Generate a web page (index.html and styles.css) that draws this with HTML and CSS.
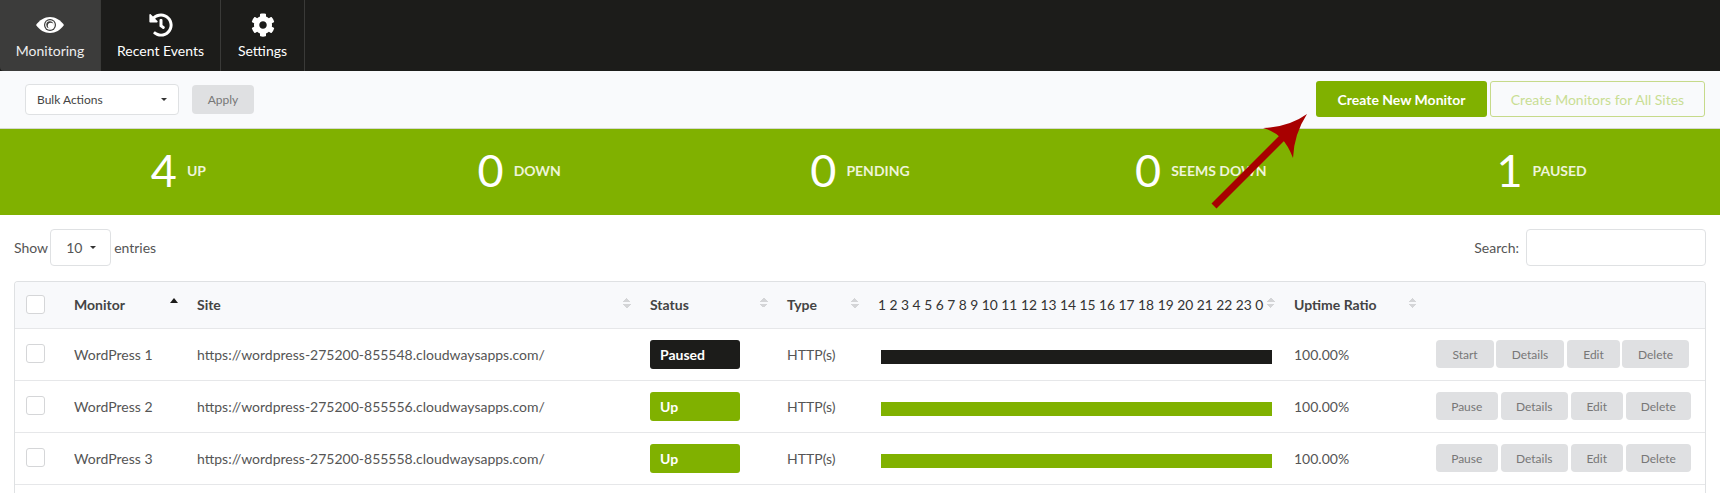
FILE: index.html
```html
<!DOCTYPE html>
<html lang="en">
<head>
<meta charset="utf-8">
<title>Monitoring</title>
<link rel="stylesheet" href="styles.css">
</head>
<body>
<nav class="nav">
  <a class="tab tab-active">
    <svg class="tab-icon eye" viewBox="0 0 28 16"><path fill="#fff" d="M0 8C3.500 3 8.500 0 14 0s10.500 3 14 8c-3.500 5-8.500 8-14 8S3.500 13 0 8z"/><circle cx="14" cy="8" r="6" fill="#3c3c3b"/><circle cx="14" cy="8" r="4.800" fill="#fff"/><circle cx="13.800" cy="7.800" r="3.500" fill="#3c3c3b"/><circle cx="14.800" cy="8.800" r="3" fill="#fff"/></svg>
    <span>Monitoring</span>
  </a>
  <a class="tab tab-events">
    <svg class="tab-icon" viewBox="0 0 512 512"><path fill="#fff" d="M504 255.531c.253 136.64-111.18 248.372-247.82 248.468-59.015.042-113.223-20.53-155.822-54.911-11.077-8.94-11.905-25.541-1.839-35.607l11.267-11.267c8.609-8.609 22.353-9.551 31.891-1.984C173.062 425.135 212.781 440 256 440c101.705 0 184-82.311 184-184 0-101.705-82.311-184-184-184-48.814 0-93.149 18.969-126.068 49.932l50.754 50.754c10.08 10.08 2.941 27.314-11.313 27.314H24c-8.837 0-16-7.163-16-16V38.627c0-14.254 17.234-21.393 27.314-11.314l49.372 49.372C129.209 34.136 189.552 8 256 8c136.81 0 247.747 110.78 248 247.531zm-180.912 78.784l9.823-12.63c8.138-10.463 6.253-25.542-4.21-33.679L288 256.349V152c0-13.255-10.745-24-24-24h-16c-13.255 0-24 10.745-24 24v135.651l65.409 50.874c10.463 8.137 25.541 6.253 33.679-4.21z"/></svg>
    <span>Recent Events</span>
  </a>
  <a class="tab tab-settings">
    <svg class="tab-icon" viewBox="0 0 512 512"><path fill="#fff" d="M487.4 315.7l-42.6-24.6c4.3-23.2 4.3-47 0-70.2l42.6-24.6c4.9-2.8 7.1-8.6 5.5-14-11.1-35.6-30-67.8-54.7-94.6-3.8-4.1-10-5.1-14.8-2.3L380.8 110c-17.9-15.4-38.5-27.3-60.8-35.1V25.8c0-5.6-3.9-10.5-9.4-11.7-36.7-8.2-74.3-7.8-109.2 0-5.5 1.2-9.4 6.1-9.4 11.7V75c-22.2 7.9-42.8 19.8-60.8 35.1L88.7 85.5c-4.9-2.8-11-1.9-14.8 2.3-24.7 26.7-43.6 58.9-54.7 94.6-1.7 5.4.6 11.2 5.5 14L67.3 221c-4.3 23.2-4.3 47 0 70.2l-42.6 24.6c-4.9 2.8-7.1 8.6-5.5 14 11.1 35.6 30 67.8 54.7 94.6 3.8 4.1 10 5.1 14.8 2.3l42.6-24.6c17.9 15.4 38.5 27.3 60.8 35.1v49.2c0 5.6 3.9 10.5 9.4 11.7 36.7 8.2 74.3 7.8 109.2 0 5.5-1.2 9.4-6.1 9.4-11.7v-49.2c22.2-7.9 42.8-19.8 60.8-35.1l42.6 24.6c4.9 2.8 11 1.9 14.8-2.3 24.7-26.7 43.6-58.9 54.7-94.6 1.5-5.5-.7-11.3-5.6-14.1zM256 336c-44.1 0-80-35.9-80-80s35.9-80 80-80 80 35.9 80 80-35.9 80-80 80z"/></svg>
    <span>Settings</span>
  </a>
</nav>

<div class="toolbar">
  <div class="toolbar-left">
    <div class="select bulk"><span>Bulk Actions</span><i class="caret"></i></div>
    <button class="btn-apply">Apply</button>
  </div>
  <div class="toolbar-right">
    <button class="btn-create">Create New Monitor</button>
    <button class="btn-outline">Create Monitors for All Sites</button>
  </div>
</div>

<section class="stats">
  <div class="stat"><span class="num">4</span><span class="label">Up</span></div>
  <div class="stat"><span class="num">0</span><span class="label">Down</span></div>
  <div class="stat"><span class="num">0</span><span class="label">Pending</span></div>
  <div class="stat"><span class="num">0</span><span class="label">Seems Down</span></div>
  <div class="stat"><span class="num">1</span><span class="label">Paused</span></div>
</section>

<div class="controls">
  <div class="length">Show <div class="select len"><span>10</span><i class="caret"></i></div> entries</div>
  <label class="search">Search: <input type="text"></label>
</div>

<div class="table-wrap">
<table class="table">
  <colgroup>
    <col class="c1"><col class="c2"><col class="c3"><col class="c4"><col class="c5"><col class="c6"><col class="c7"><col class="c8">
  </colgroup>
  <thead>
    <tr>
      <th><span class="check"></span></th>
      <th class="sort-asc">Monitor</th>
      <th class="sortable">Site</th>
      <th class="sortable">Status</th>
      <th class="sortable">Type</th>
      <th class="sortable hours">1 2 3 4 5 6 7 8 9 10 11 12 13 14 15 16 17 18 19 20 21 22 23 0</th>
      <th class="sortable">Uptime Ratio</th>
      <th></th>
    </tr>
  </thead>
  <tbody>
    <tr>
      <td><span class="check"></span></td>
      <td>WordPress 1</td>
      <td>https://wordpress-275200-855548.cloudwaysapps.com/</td>
      <td><span class="badge badge-paused">Paused</span></td>
      <td>HTTP(s)</td>
      <td class="bar-cell"><div class="bar bar-paused"></div></td>
      <td>100.00%</td>
      <td><div class="actions tight"><button class="a-start">Start</button><button class="a-details">Details</button><button class="a-edit">Edit</button><button class="a-delete">Delete</button></div></td>
    </tr>
    <tr>
      <td><span class="check"></span></td>
      <td>WordPress 2</td>
      <td>https://wordpress-275200-855556.cloudwaysapps.com/</td>
      <td><span class="badge badge-up">Up</span></td>
      <td>HTTP(s)</td>
      <td class="bar-cell"><div class="bar bar-up"></div></td>
      <td>100.00%</td>
      <td><div class="actions"><button class="a-pause">Pause</button><button class="a-details">Details</button><button class="a-edit">Edit</button><button class="a-delete">Delete</button></div></td>
    </tr>
    <tr>
      <td><span class="check"></span></td>
      <td>WordPress 3</td>
      <td>https://wordpress-275200-855558.cloudwaysapps.com/</td>
      <td><span class="badge badge-up">Up</span></td>
      <td>HTTP(s)</td>
      <td class="bar-cell"><div class="bar bar-up"></div></td>
      <td>100.00%</td>
      <td><div class="actions"><button class="a-pause">Pause</button><button class="a-details">Details</button><button class="a-edit">Edit</button><button class="a-delete">Delete</button></div></td>
    </tr>
  </tbody>
</table>
</div>

<svg class="arrow" viewBox="1200 100 120 120" width="120" height="120">
  <line x1="1214" y1="206" x2="1284" y2="136" stroke="#a80000" stroke-width="7"/>
  <path fill="#a80000" d="M1307 114Q1289 127 1263 128Q1274 131 1281 138Q1288 145 1293 158Q1294 134 1307 114Z"/>
</svg>
</body>
</html>
```
FILE: styles.css
```css
* { box-sizing: border-box; }
html, body { margin: 0; height: 493px; overflow: hidden; }
body { font-family: Lato, "Noto Sans", sans-serif; font-size: 14px; color: #555; background: #fff; position: relative; }
button { font-family: inherit; border: 0; margin: 0; padding: 0; }

.nav { display: flex; height: 71px; background: #1c1c1a; }
.tab { display: flex; flex-direction: column; align-items: center; color: #fff; font-size: 14px; border-right: 1px solid #3a3a38; padding-top: 13px; }
.tab span { margin-top: 5px; line-height: 17px; }
.tab-active { width: 101px; background: #3c3c3b; border-bottom-left-radius: 4px; color: #eee; }
.tab-events { width: 120px; }
.tab-settings { width: 84px; }
.tab-icon { width: 24px; height: 24px; }
.eye { width: 28px; height: 16px; margin: 4px 0; }

.toolbar { height: 58px; background: #f9fafc; border-bottom: 1px solid #d5d8d0; display: flex; justify-content: space-between; padding: 10px 15px 0 25px; }
.toolbar-left { display: flex; align-items: center; gap: 13px; height: 31px; margin-top: 3px; }
.toolbar-right { display: flex; align-items: flex-start; gap: 3px; }
.select { background: #fff; border: 1px solid #dfe1e3; border-radius: 4px; display: flex; align-items: center; justify-content: space-between; }
.bulk { width: 154px; height: 31px; padding: 0 11px; font-size: 12px; color: #444; }
.caret { width: 0; height: 0; border-left: 3px solid transparent; border-right: 3px solid transparent; border-top: 3px solid #333; }
.btn-apply { width: 62px; height: 29px; border-radius: 4px; background: #dfe0e2; color: #777; font-size: 12px; }
.btn-create { width: 171px; height: 36px; border-radius: 3px; background: #80b100; color: #fff; font-size: 14px; font-weight: 700; }
.btn-outline { width: 215px; height: 36px; border-radius: 3px; background: transparent; border: 1px solid #c6da8a; color: #c9de94; font-size: 14px; }

.stats { height: 86px; background: #80b100; display: grid; grid-template-columns: repeat(5, 1fr); padding: 0 8px; color: #fff; }
.stat { display: flex; align-items: center; justify-content: center; gap: 10px; padding-bottom: 2px; }
.num { font-size: 45px; font-weight: 400; line-height: 1; margin-top: -2px; }
.label { font-size: 14px; font-weight: 700; text-transform: uppercase; color: #eef4d9; margin-top: -2px; }

.controls { display: flex; justify-content: space-between; align-items: center; padding: 14px 14px 0; height: 51px; }
.length, .search { display: flex; align-items: center; gap: 3px; font-size: 14px; color: #555; }
.search { gap: 7px; }
.len { width: 61px; height: 37px; margin-left: -1px; padding: 0 14px 0 15px; font-size: 14px; }
.search input { width: 180px; height: 37px; border: 1px solid #dfe1e3; border-radius: 4px; background: #fff; margin: 0; }

.table-wrap { margin: 15px 14px 0; border: 1px solid #dfe1e3; border-bottom: 0; border-top-left-radius: 4px; border-top-right-radius: 4px; height: 212px; overflow: hidden; }
.table { width: 1690px; table-layout: fixed; border-collapse: collapse; }
.c1 { width: 45px; } .c2 { width: 123px; } .c3 { width: 453px; } .c4 { width: 137px; }
.c5 { width: 91px; } .c6 { width: 416px; } .c7 { width: 142px; } .c8 { width: 283px; }
th, td { padding: 0 14px; text-align: left; white-space: nowrap; border-bottom: 1px solid #e6e7e9; }
th { height: 46px; background: #f8f9fb; font-weight: 700; font-size: 14px; color: #444; position: relative; }
td { height: 52px; font-size: 14px; color: #555; }
th:first-child, td:first-child { padding: 0 0 0 11px; }
.check { display: block; width: 19px; height: 19px; border: 1px solid #d5d6d8; border-radius: 3px; background: #fff; }
tbody .check { margin-top: -2px; }
.sortable::after { content: ""; position: absolute; right: 5px; top: 16px; width: 8px; height: 10px;
  background: linear-gradient(135deg, transparent 50%, #d4d5d7 50%) 0 0/4px 4px no-repeat,
              linear-gradient(225deg, transparent 50%, #d4d5d7 50%) 4px 0/4px 4px no-repeat,
              linear-gradient(45deg, transparent 50%, #d4d5d7 50%) 0 6px/4px 4px no-repeat,
              linear-gradient(315deg, transparent 50%, #d4d5d7 50%) 4px 6px/4px 4px no-repeat; }
.sort-asc::after { content: ""; position: absolute; width: 0; height: 0; border-left: 4.500px solid transparent; border-right: 4.500px solid transparent; border-bottom: 5px solid #1c1c1a; top: 16px; right: 5px; }
.hours { padding: 0 0 0 14px; font-weight: 400; font-size: 13.800px; color: #333; }
.badge { display: block; width: 90px; height: 29px; line-height: 29px; border-radius: 3px; padding-left: 10px; color: #fff; font-size: 14px; font-weight: 700; }
.badge-paused { background: #1c1c1a; }
.badge-up { background: #80b100; }
.bar-cell { padding-left: 17px; padding-right: 8px; }
.bar { height: 14px; width: 391px; margin-top: 6px; }
.bar-paused { background: #1c1c1a; }
.bar-up { background: #80b100; }
.actions { display: flex; gap: 3px; }
.actions button { height: 28px; border-radius: 4px; background: #dfe0e2; color: #777; font-size: 12px; }
.a-start { width: 58px; } .a-pause { width: 62px; } .a-details { width: 68px; } .a-edit { width: 52px; } .a-delete { width: 66px; }
.tight { gap: 2px; }
.tight .a-edit { width: 53px; margin-left: 1px; }
.tight .a-delete { width: 67px; }
.arrow { position: absolute; left: 1200px; top: 100px; }
```
